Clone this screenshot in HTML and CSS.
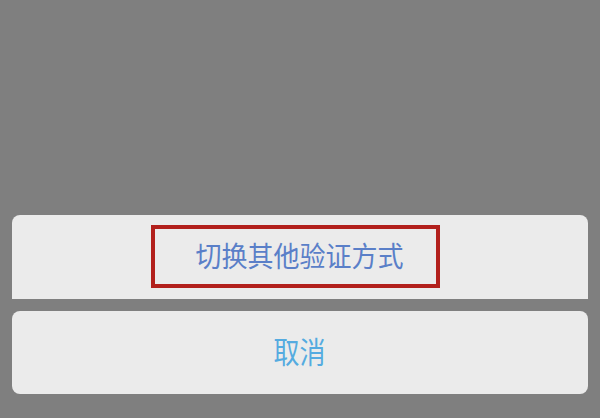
FILE: index.html
```html
<!DOCTYPE html>
<html lang="zh">
<head>
<meta charset="utf-8">
<link rel="stylesheet" href="styles.css">
</head>
<body>
<div class="sheet">
  <div class="card card-top">
    <div class="highlight"><span class="label label-main">切换其他验证方式</span></div>
  </div>
  <div class="card card-cancel">
    <span class="label label-cancel">取消</span>
  </div>
</div>
</body>
</html>
```
FILE: styles.css
```css
html, body {
  margin: 0;
  padding: 0;
  background: #7f7f7f;
  width: 600px;
  height: 418px;
  overflow: hidden;
}
.sheet {
  padding: 215px 12px 0 12px;
  display: flex;
  flex-direction: column;
  gap: 12px;
}
.card {
  background: #ebebeb;
  display: flex;
  align-items: center;
  justify-content: center;
  font-family: "Noto Sans CJK SC", "Noto Sans", sans-serif;
}
.card-top {
  height: 84px;
  border-radius: 8px 8px 0 0;
}
.card-cancel {
  height: 83px;
  border-radius: 8px;
}
.highlight {
  box-sizing: border-box;
  width: 289px;
  height: 63px;
  border: 4px solid #b2201c;
  margin-right: 9px;
  margin-top: -2px;
  display: flex;
  align-items: center;
  justify-content: center;
  padding-left: 8px;
}
.label {
  display: inline-block;
  font-size: 26px;
  line-height: 1;
  transform: scaleY(1.08);
}
.label-main {
  color: #5a7fc8;
  margin-top: -2px;
}
.label-cancel {
  color: #55abe0;
  transform: scaleY(1.15);
  margin-left: -1px;
  margin-top: -5px;
}
```
